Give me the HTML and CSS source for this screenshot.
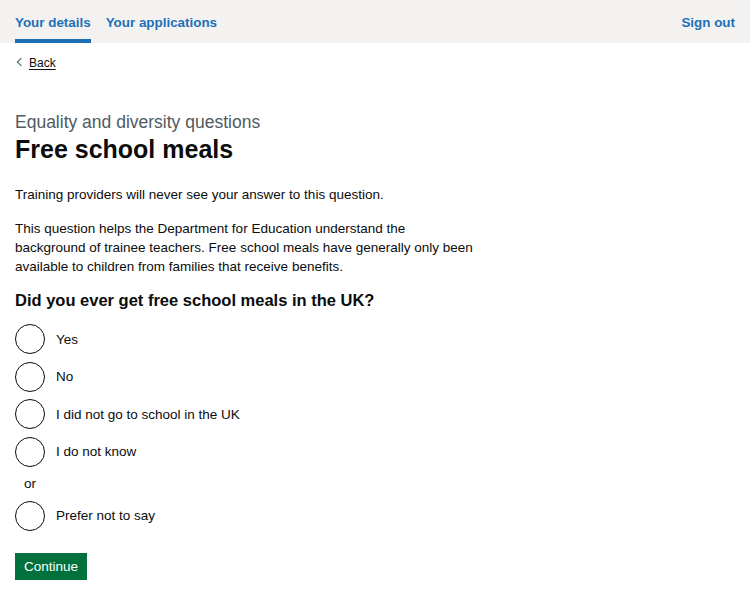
FILE: index.html
```html
<!DOCTYPE html>
<html lang="en">
<head>
<meta charset="utf-8">
<title>Free school meals</title>
<link rel="stylesheet" href="styles.css">
</head>
<body>
<header class="header">
  <nav class="nav">
    <a class="nav-link active" href="#">Your details</a>
    <a class="nav-link" href="#">Your applications</a>
  </nav>
  <a class="nav-link" href="#">Sign out</a>
</header>
<main class="main">
  <a class="back" href="#"><span class="chev"></span>Back</a>
  <span class="caption">Equality and diversity questions</span>
  <h1 class="title">Free school meals</h1>
  <p class="body">Training providers will never see your answer to this question.</p>
  <p class="body narrow">This question helps the Department for Education understand the background of trainee teachers. Free school meals have generally only been available to children from families that receive benefits.</p>
  <fieldset class="fieldset">
    <legend class="legend">Did you ever get free school meals in the UK?</legend>
    <div class="radios">
      <label class="radio"><span class="circle"></span><span class="label">Yes</span></label>
      <label class="radio"><span class="circle"></span><span class="label">No</span></label>
      <label class="radio"><span class="circle"></span><span class="label">I did not go to school in the UK</span></label>
      <label class="radio"><span class="circle"></span><span class="label">I do not know</span></label>
      <div class="divider">or</div>
      <label class="radio"><span class="circle"></span><span class="label">Prefer not to say</span></label>
    </div>
  </fieldset>
  <button class="button" type="button">Continue</button>
</main>
</body>
</html>
```
FILE: styles.css
```css
body {
  margin: 0;
  font-family: "Liberation Sans", Arial, sans-serif;
  color: #0b0c0c;
  background: #fff;
}
.header {
  background: #f3f2f1;
  height: 43px;
  display: flex;
  justify-content: space-between;
  padding: 0 15px;
  box-sizing: border-box;
}
.nav {
  display: flex;
  gap: 15px;
}
.nav-link {
  display: block;
  box-sizing: border-box;
  height: 43px;
  padding-top: 13.5px;
  font-size: 13.4px;
  line-height: 17px;
  font-weight: 700;
  color: #1d70b8;
  text-decoration: none;
  border-bottom: 4px solid transparent;
}
.nav-link.active {
  border-bottom-color: #1d70b8;
}
.main {
  padding: 0 15px;
}
.back {
  display: inline-flex;
  align-items: center;
  margin-top: 12px;
  font-size: 12px;
  line-height: 16px;
  color: #0b0c0c;
  text-decoration: underline;
  text-underline-offset: 2px;
}
.chev {
  display: inline-block;
  width: 5px;
  height: 5px;
  border-left: 1px solid #505a5f;
  border-bottom: 1px solid #505a5f;
  transform: rotate(45deg);
  margin: 0 5px 2px 3px;
}
.caption {
  display: block;
  margin-top: 39px;
  font-size: 17.5px;
  line-height: 24px;
  color: #505a5f;
}
.title {
  margin: 0 0 21px;
  font-size: 25px;
  line-height: 30px;
  font-weight: 700;
}
.body {
  margin: 0 0 15px;
  font-size: 13.5px;
  line-height: 19px;
}
.narrow {
  max-width: 460px;
  margin-bottom: 12px;
}
.fieldset {
  border: 0;
  margin: 0 0 22px;
  padding: 0;
}
.legend {
  padding: 0;
  margin-bottom: 12px;
  font-size: 16.5px;
  line-height: 24px;
  font-weight: 700;
}
.radios {
  display: flex;
  flex-direction: column;
  gap: 7.5px;
}
.radio {
  display: flex;
  align-items: center;
  gap: 11px;
  height: 30px;
}
.circle {
  width: 30px;
  height: 30px;
  box-sizing: border-box;
  border: 1.5px solid #0b0c0c;
  border-radius: 50%;
  flex: none;
}
.label {
  font-size: 13.5px;
  line-height: 19px;
}
.divider {
  width: 30px;
  text-align: center;
  font-size: 13.5px;
  line-height: 19px;
}
.button {
  display: block;
  background: #00703c;
  color: #fff;
  border: 0;
  border-radius: 0;
  box-shadow: 0 2px 0 #002d18;
  font-family: inherit;
  font-size: 13.5px;
  line-height: 19px;
  padding: 4px 9px;
  height: 27px;
}
```
